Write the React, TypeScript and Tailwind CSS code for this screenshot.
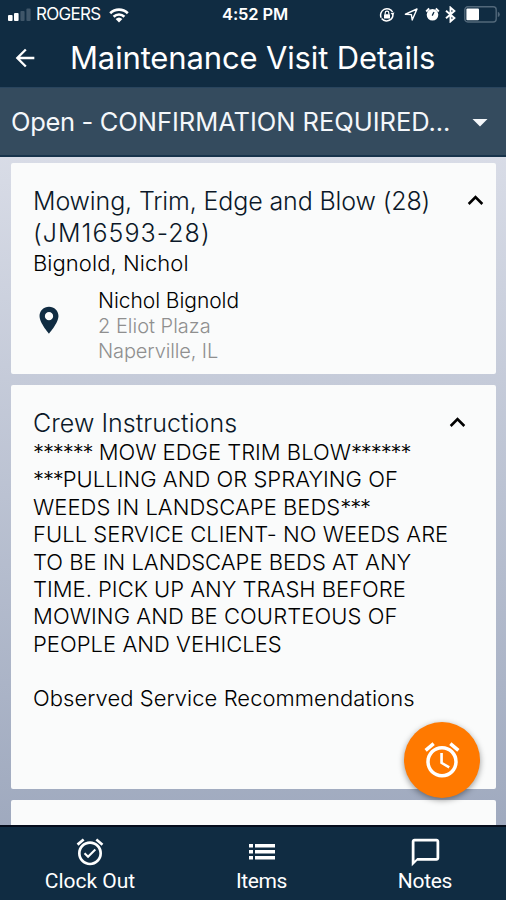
import {
  MdAlarm,
  MdAlarmOn,
  MdArrowBack,
  MdArrowDropDown,
  MdChatBubbleOutline,
  MdKeyboardArrowUp,
} from 'react-icons/md';

const instructions = [
  { before: '******', text: ' MOW EDGE TRIM BLOW', after: '******', spacing: 'tracking-[0px]' },
  { before: '***', text: 'PULLING AND OR SPRAYING OF', after: '', spacing: 'tracking-[0.03px]' },
  { before: '', text: 'WEEDS IN LANDSCAPE BEDS', after: '***', spacing: 'tracking-[0.04px]' },
  { before: '', text: 'FULL SERVICE CLIENT- NO WEEDS ARE', after: '', spacing: 'tracking-[0.04px]' },
  { before: '', text: 'TO BE IN LANDSCAPE BEDS AT ANY', after: '', spacing: 'tracking-[0px]' },
  { before: '', text: 'TIME. PICK UP ANY TRASH BEFORE', after: '', spacing: 'tracking-[0px]' },
  { before: '', text: 'MOWING AND BE COURTEOUS OF', after: '', spacing: 'tracking-[0.08px]' },
  { before: '', text: 'PEOPLE AND VEHICLES', after: '', spacing: 'tracking-[0.04px]' },
];

function StatusBar() {
  return (
    <div className="flex h-[29px] items-center pl-2 pr-[6px] text-white">
      <div className="flex w-[214px] items-center">
        {/* Signal strength */}
        <svg className="h-[14px] w-[24px]" viewBox="0 0 24 14">
          <rect x="0" y="7" width="4.6" height="6" rx="1" fill="#fff" />
          <rect x="6" y="5" width="4.6" height="8" rx="1" fill="#fff" />
          <rect x="12.4" y="3" width="4.2" height="10" rx="1" fill="#3f5669" />
          <rect x="18.4" y="0.5" width="4.2" height="12.5" rx="1" fill="#3f5669" />
        </svg>
        <span className="ml-1 text-[17px] tracking-[-0.7px]">ROGERS</span>
        {/* Wifi */}
        <svg className="ml-2 h-[16px] w-[20px]" viewBox="0 0 20 16" fill="none" stroke="#fff" strokeWidth="2.6">
          <path d="M1.2 6.2a12.6 12.6 0 0 1 17.6 0" />
          <path d="M4.6 9.7a7.8 7.8 0 0 1 10.8 0" />
          <path d="M10 15.6 6.6 12.1a5 5 0 0 1 6.8 0Z" fill="#fff" stroke="none" />
        </svg>
      </div>
      <span className="w-[80px] text-[16.5px] font-semibold tracking-[-0.1px]">4:52 PM</span>
      <div className="ml-auto flex items-center">
        {/* Rotation lock */}
        <svg className="h-4 w-4" viewBox="0 0 16 16" fill="none" stroke="#fff">
          <path d="M2.2 10.8A6.4 6.4 0 0 1 13.6 5M13.8 6.4A6.4 6.4 0 0 1 2.6 11.6" strokeWidth="1.5" />
          <path d="m15.6 5.6-2 2.8-2-2.4Z" fill="#fff" stroke="none" />
          <rect x="5" y="7.2" width="6" height="4.4" rx="0.6" fill="#fff" stroke="none" />
          <path d="M6.2 7.4V6a1.8 1.8 0 0 1 3.6 0v1.4" strokeWidth="1.2" />
        </svg>
        {/* Location arrow */}
        <svg className="ml-[9px] h-[14px] w-[14px]" viewBox="0 0 14 14">
          <path d="M13 1 8.2 12 7.4 6.6 1.4 6.2Z" fill="none" stroke="#fff" strokeWidth="1.4" strokeLinejoin="round" />
        </svg>
        {/* Alarm */}
        <svg className="ml-[7px] h-[15px] w-[15px]" viewBox="0 0 15 15">
          <circle cx="7.5" cy="7.8" r="5.8" fill="#fff" />
          <path d="M1.2 4.4 4.2 1.6M13.8 4.4l-3-2.8" stroke="#fff" strokeWidth="2" />
          <path d="M7.2 8.6l1.8-3.6" fill="none" stroke="#102c42" strokeWidth="1.3" />
        </svg>
        {/* Bluetooth */}
        <svg className="mr-[5px] ml-[5px] h-[17px] w-[11px]" viewBox="0 0 11 17" fill="none" stroke="#fff" strokeWidth="1.9">
          <path d="M1 4.8 9.4 12 5.5 15.4V1.6L9.4 5 1 12.2" />
        </svg>
        {/* Battery */}
        <svg className="ml-[3px] h-[17px] w-[36px]" viewBox="0 0 36 17">
          <rect x="0.8" y="0.8" width="31.4" height="15.2" rx="3" fill="none" stroke="#52687a" strokeWidth="1.4" />
          <rect x="2.4" y="2.6" width="12.6" height="11.6" rx="1" fill="#fff" />
          <path d="M33.8 5.8q2 .6 2 2.6t-2 2.6Z" fill="#52687a" />
        </svg>
      </div>
    </div>
  );
}

export default function App() {
  return (
    <div className="relative flex h-[900px] w-[506px] flex-col overflow-hidden bg-gradient-to-b from-[#e6e8f0] to-[#99a4ba] font-['Inter',sans-serif] whitespace-nowrap">
      {/* Header */}
      <header className="h-[87px] shrink-0 bg-[#102c42] text-white">
        <StatusBar />
        <div className="flex h-[57px] items-center pl-[11px]">
          <MdArrowBack className="h-[28px] w-[28px]" />
          <h1 className="ml-[31px] text-[31px] leading-[40px] tracking-[-0.14px]">Maintenance Visit Details</h1>
        </div>
      </header>

      {/* Visit status */}
      <div className="flex h-[70px] shrink-0 items-center justify-between border-t border-b-2 border-t-[#29455e] border-b-[#17334b] bg-[#344b5e] pr-[8px] pl-[11px] text-[#f4f7fa]">
        <span className="pt-[2px] text-[25.5px]">
          <span className="tracking-[-0.35px]">Open - </span>
          <span className="tracking-[-0.03px]">CONFIRMATION REQUIRED...</span>
        </span>
        <MdArrowDropDown className="h-[36px] w-[36px]" />
      </div>

      <main className="flex min-h-0 flex-1 flex-col gap-[11px] overflow-hidden pt-[6px] pr-[10px] pl-[11px]">
        {/* Visit summary */}
        <section className="flex h-[211px] shrink-0 flex-col rounded-[2px] bg-[#fafbfb] pt-[23px] pl-[22px] text-black">
          <div className="flex justify-between pr-[5px]">
            <h2 className="text-[25px] leading-[31.5px] font-light text-[#0b1828]">
              <span className="tracking-[-0.13px]">Mowing, Trim, Edge and Blow (28)</span>
              <br />
              <span className="tracking-[1.05px]">(JM16593-28)</span>
            </h2>
            <MdKeyboardArrowUp className="-mt-px h-[31px] w-[31px]" />
          </div>
          <p className="text-[22px] leading-[29px] font-light tracking-[0.06px]">Bignold, Nichol</p>
          <div className="mt-[11px] flex items-start">
            {/* Map pin */}
            <svg className="mt-[15px] h-[32px] w-[32px]" viewBox="0 0 24 24" fill="#102c42">
              <path fillRule="evenodd" d="M12 2C8 2 4.9 5.1 4.9 9c0 5.2 7.1 13.2 7.1 13.2S19.1 14.2 19.1 9C19.1 5.1 16 2 12 2Zm0 4a3.1 3.1 0 1 1 0 6.2A3.1 3.1 0 0 1 12 6Z" />
            </svg>
            <div className="ml-[33px] text-[20px] leading-[25px] font-light">
              <p className="-mt-px mb-px text-[21px] tracking-[-0.05px]">Nichol Bignold</p>
              <p className="text-[#8f8f8f]">2 Eliot Plaza</p>
              <p className="tracking-[-0.12px] text-[#8f8f8f]">Naperville, IL</p>
            </div>
          </div>
        </section>

        {/* Crew instructions */}
        <section className="h-[404px] shrink-0 rounded-[2px] bg-[#fafbfb] pt-[22px] pl-[22px] text-black">
          <div className="flex justify-between pr-[23px]">
            <h2 className="text-[25px] leading-[32px] font-light tracking-[0.05px] text-[#0b1828]">Crew Instructions</h2>
            <MdKeyboardArrowUp className="h-[31px] w-[31px]" />
          </div>
          <div className="text-[22px] leading-[27.4px] font-light">
            {instructions.map((line) => (
              <p key={line.text} className="whitespace-pre">
                <span className="tracking-[-1.1px]">{line.before}</span>
                <span className={line.spacing}>{line.text}</span>
                <span className="tracking-[-1.1px]">{line.after}</span>
              </p>
            ))}
            <p className="mt-[27px] tracking-[0.05px]">Observed Service Recommendations</p>
          </div>
        </section>

        <section className="h-[60px] shrink-0 rounded-[2px] bg-[#fafbfb]" />
      </main>

      {/* Clock button floating over the cards */}
      <button className="absolute top-[722px] left-[404px] flex h-[76px] w-[76px] items-center justify-center rounded-full bg-[#ff7900] text-white shadow-[0_2px_6px_rgba(0,0,0,0.4)]">
        <MdAlarm className="h-[42px] w-[42px]" />
      </button>

      {/* Bottom navigation */}
      <nav className="flex h-[75px] shrink-0 border-t-2 border-[#050d1c] bg-[#102c42] font-['Roboto',sans-serif] text-[21px] leading-[26px] text-white">
        <div className="flex w-[180px] flex-col items-center pt-[9px]">
          <MdAlarmOn className="h-[32px] w-[32px]" />
          <span>Clock Out</span>
        </div>
        <div className="flex w-[163px] flex-col items-center pt-[9px]">
          {/* Bulleted list */}
          <svg className="h-[32px] w-[26px]" viewBox="0 0 26 32" fill="#fff">
            <path d="M0 8h4v3.6H0zM6 8h20v3.6H6zM0 14h4v3.6H0zM6 14h20v3.6H6zM0 20h4v3.6H0zM6 20h20v3.6H6z" />
          </svg>
          <span className="tracking-[-0.4px]">Items</span>
        </div>
        <div className="flex flex-1 flex-col items-center pt-[9px] pl-[1px]">
          <MdChatBubbleOutline className="h-[33px] w-[33px] -mb-px" />
          <span className="tracking-[-0.3px]">Notes</span>
        </div>
      </nav>
    </div>
  );
}
